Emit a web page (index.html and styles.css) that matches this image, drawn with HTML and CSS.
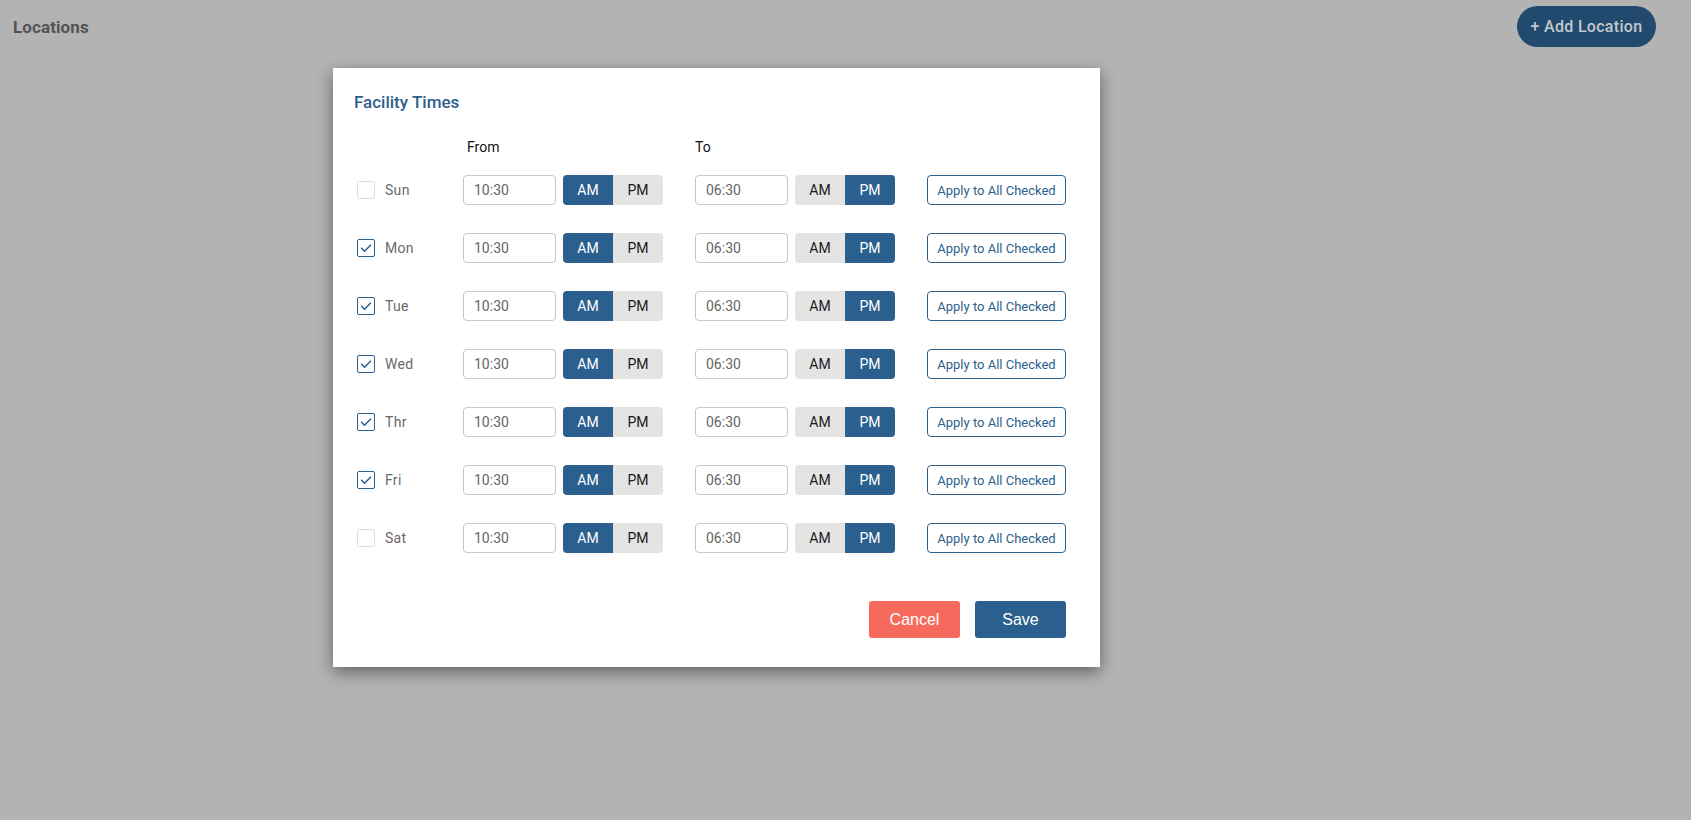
FILE: index.html
```html
<!DOCTYPE html>
<html lang="en">
<head>
<meta charset="utf-8">
<title>Locations</title>
<link rel="stylesheet" href="styles.css">
</head>
<body>
<header class="topbar">
  <h1 class="page-title">Locations</h1>
  <button class="add-btn">+ Add Location</button>
</header>

<div class="modal">
  <h2 class="modal-title">Facility Times</h2>
  <div class="grid grid-head">
    <div></div>
    <div class="col-head">From</div>
    <div class="col-head to">To</div>
    <div></div>
  </div>
  <div class="grid">
    <label class="day"><span class="cb"></span><span class="day-name">Sun</span></label>
    <div class="tgroup"><input class="time" value="10:30"><div class="seg"><span class="on">AM</span><span>PM</span></div></div>
    <div class="tgroup"><input class="time" value="06:30"><div class="seg"><span>AM</span><span class="on">PM</span></div></div>
    <button class="apply">Apply to All Checked</button>

    <label class="day"><span class="cb checked"><svg viewBox="0 0 18 18"><path d="M4 9.3l3.3 3.3L14 5.8"/></svg></span><span class="day-name">Mon</span></label>
    <div class="tgroup"><input class="time" value="10:30"><div class="seg"><span class="on">AM</span><span>PM</span></div></div>
    <div class="tgroup"><input class="time" value="06:30"><div class="seg"><span>AM</span><span class="on">PM</span></div></div>
    <button class="apply">Apply to All Checked</button>

    <label class="day"><span class="cb checked"><svg viewBox="0 0 18 18"><path d="M4 9.3l3.3 3.3L14 5.8"/></svg></span><span class="day-name">Tue</span></label>
    <div class="tgroup"><input class="time" value="10:30"><div class="seg"><span class="on">AM</span><span>PM</span></div></div>
    <div class="tgroup"><input class="time" value="06:30"><div class="seg"><span>AM</span><span class="on">PM</span></div></div>
    <button class="apply">Apply to All Checked</button>

    <label class="day"><span class="cb checked"><svg viewBox="0 0 18 18"><path d="M4 9.3l3.3 3.3L14 5.8"/></svg></span><span class="day-name">Wed</span></label>
    <div class="tgroup"><input class="time" value="10:30"><div class="seg"><span class="on">AM</span><span>PM</span></div></div>
    <div class="tgroup"><input class="time" value="06:30"><div class="seg"><span>AM</span><span class="on">PM</span></div></div>
    <button class="apply">Apply to All Checked</button>

    <label class="day"><span class="cb checked"><svg viewBox="0 0 18 18"><path d="M4 9.3l3.3 3.3L14 5.8"/></svg></span><span class="day-name">Thr</span></label>
    <div class="tgroup"><input class="time" value="10:30"><div class="seg"><span class="on">AM</span><span>PM</span></div></div>
    <div class="tgroup"><input class="time" value="06:30"><div class="seg"><span>AM</span><span class="on">PM</span></div></div>
    <button class="apply">Apply to All Checked</button>

    <label class="day"><span class="cb checked"><svg viewBox="0 0 18 18"><path d="M4 9.3l3.3 3.3L14 5.8"/></svg></span><span class="day-name">Fri</span></label>
    <div class="tgroup"><input class="time" value="10:30"><div class="seg"><span class="on">AM</span><span>PM</span></div></div>
    <div class="tgroup"><input class="time" value="06:30"><div class="seg"><span>AM</span><span class="on">PM</span></div></div>
    <button class="apply">Apply to All Checked</button>

    <label class="day"><span class="cb"></span><span class="day-name">Sat</span></label>
    <div class="tgroup"><input class="time" value="10:30"><div class="seg"><span class="on">AM</span><span>PM</span></div></div>
    <div class="tgroup"><input class="time" value="06:30"><div class="seg"><span>AM</span><span class="on">PM</span></div></div>
    <button class="apply">Apply to All Checked</button>
  </div>
  <div class="actions">
    <button class="btn cancel">Cancel</button>
    <button class="btn save">Save</button>
  </div>
</div>
</body>
</html>
```

FILE: styles.css
```css
* { box-sizing: border-box; }
html, body { margin: 0; padding: 0; }
body {
  background: #b3b3b3;
  font-family: Roboto, "Liberation Sans", Arial, sans-serif;
  height: 820px;
  overflow: hidden;
}
.topbar {
  display: flex;
  justify-content: space-between;
  align-items: center;
  padding: 6px 35px 0 13px;
  height: 47px;
}
.page-title {
  margin: 0;
  font-size: 17px;
  font-weight: 700;
  color: #535353;
  letter-spacing: 0.1px;
}
.add-btn {
  font-family: Roboto, sans-serif;
  height: 41px;
  width: 139px;
  border: none;
  border-radius: 21px;
  background: #22496e;
  color: #c3c8cd;
  font-size: 16px;
  font-weight: 500;
  letter-spacing: 0.3px;
  padding: 0;
}
.modal {
  width: 767px;
  margin: 21px 0 0 333px;
  height: 599px;
  background: #fff;
  box-shadow: 0 5px 15px rgba(0, 0, 0, 0.45);
  padding: 24px 34px 29px 21px;
  display: flex;
  flex-direction: column;
}
.modal-title {
  margin: 0;
  font-size: 17px;
  font-weight: 500;
  color: #2d5f8b;
  line-height: 20px;
}
.grid {
  display: grid;
  grid-template-columns: 74px 200px 200px 139px;
  grid-auto-rows: 30px;
  column-gap: 32px;
  row-gap: 28px;
  margin-left: 3px;
  align-items: center;
}
.grid-head {
  grid-auto-rows: 17px;
  margin-top: 27px;
  margin-bottom: 19px;
}
.col-head {
  font-size: 14px;
  color: #111;
  padding-left: 4px;
  line-height: 17px;
}
.col-head.to { padding-left: 0; }
.day {
  display: flex;
  align-items: center;
  gap: 10px;
}
.cb {
  width: 18px;
  height: 18px;
  border: 1px solid #dcdcdc;
  border-radius: 2px;
  background: #fff;
  display: flex;
}
.cb.checked { border: 1.5px solid #2d5f8b; }
.cb svg { width: 100%; height: 100%; }
.cb path { fill: none; stroke: #2d5f8b; stroke-width: 1.7; stroke-linecap: round; stroke-linejoin: round; }
.day-name {
  font-size: 14px;
  color: #6a6a6a;
  letter-spacing: 0.3px;
}
.tgroup {
  display: flex;
  gap: 7px;
}
.time {
  width: 93px;
  height: 30px;
  border: 1px solid #c6c6c6;
  border-radius: 4px;
  padding: 0 0 0 10px;
  font-family: Roboto, sans-serif;
  font-size: 14px;
  color: #666;
  background: #fff;
  outline: none;
}
.seg {
  display: flex;
  width: 100px;
  height: 30px;
  border-radius: 4px;
  overflow: hidden;
  background: #e4e4e4;
}
.seg span {
  flex: 1;
  display: flex;
  align-items: center;
  justify-content: center;
  font-size: 14px;
  color: #1a1a1a;
}
.seg span.on {
  background: #2a5f8e;
  color: #fff;
}
.apply {
  width: 139px;
  height: 30px;
  border: 1px solid #2d5f8b;
  border-radius: 4px;
  background: #fff;
  color: #2d5f8b;
  font-family: Roboto, sans-serif;
  font-size: 13px;
  padding: 0;
}
.actions {
  margin-top: auto;
  display: flex;
  justify-content: flex-end;
  gap: 15px;
}
.btn {
  width: 91px;
  height: 37px;
  border: none;
  border-radius: 3px;
  font-family: "Liberation Sans", Arial, sans-serif;
  font-size: 16px;
  color: #fff;
  padding: 0;
}
.cancel { background: #f66a5e; }
.save { background: #2a5f8e; }
```
